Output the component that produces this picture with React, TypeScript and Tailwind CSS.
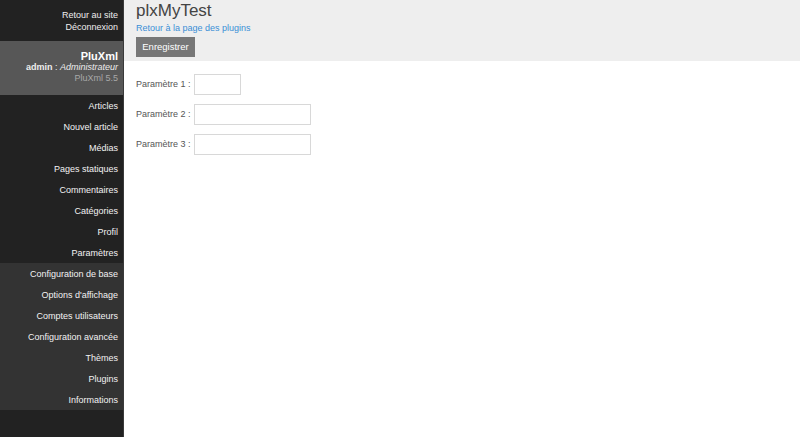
import React from 'react';

const mainMenu = [
  'Articles',
  'Nouvel article',
  'Médias',
  'Pages statiques',
  'Commentaires',
  'Catégories',
  'Profil',
  'Paramètres',
];

const subMenu = [
  'Configuration de base',
  "Options d'affichage",
  'Comptes utilisateurs',
  'Configuration avancée',
  'Thèmes',
  'Plugins',
  'Informations',
];

const params = [
  { label: 'Paramètre 1 :', width: 'w-[47px]' },
  { label: 'Paramètre 2 :', width: 'w-[117px]' },
  { label: 'Paramètre 3 :', width: 'w-[117px]' },
];

export default function App() {
  return (
    <div className="flex h-screen w-full bg-white font-['Liberation_Sans',Arial,sans-serif] text-[9px]">
      {/* Sidebar */}
      <aside className="flex w-[124px] shrink-0 flex-col bg-[#222] border-r border-[#3a3a3a] text-right">
        <div className="h-[41px] pt-[9px] pr-[5px] leading-[12px] text-[#eee]">
          <a className="block">Retour au site</a>
          <a className="block">Déconnexion</a>
        </div>

        <div className="h-[54px] bg-[#575757] pt-[9px] pr-[5px] leading-[11px]">
          <div className="text-[11px] font-bold leading-[12px] text-white">PluXml</div>
          <div className="text-[#eee]">
            <strong>admin</strong> : <em>Administrateur</em>
          </div>
          <div className="text-[#a8a8a8]">PluXml 5.5</div>
        </div>

        <nav className="flex flex-col">
          {mainMenu.map((item) => (
            <a key={item} className="h-[21px] pr-[5px] leading-[22px] text-[#f2f2f2]">
              {item}
            </a>
          ))}
          <div className="flex flex-col bg-[#333]">
            {subMenu.map((item) => (
              <a key={item} className="h-[21px] pr-[5px] leading-[22px] text-[#f2f2f2]">
                {item}
              </a>
            ))}
          </div>
        </nav>
      </aside>

      {/* Main */}
      <main className="flex-1">
        <header className="h-[61px] bg-[#eee] pl-[12px] pt-[1px]">
          <h2 className="text-[17px] leading-[20px] text-[#444]">plxMyTest</h2>
          <a className="block leading-[14px] text-[#3b8fd6]">Retour à la page des plugins</a>
          <button className="mt-[2px] h-[20px] w-[59px] bg-[#777] text-[9.5px] text-white">
            Enregistrer
          </button>
        </header>

        <form className="flex flex-col gap-[9px] pl-[12px] pt-[13px]">
          {params.map((p) => (
            <div key={p.label} className="flex h-[21px] items-center">
              <label className="w-[58px] whitespace-nowrap text-[#555]">{p.label}</label>
              <input
                type="text"
                className={`${p.width} h-[21px] border border-[#d8d8d8] bg-white`}
              />
            </div>
          ))}
        </form>
      </main>
    </div>
  );
}
